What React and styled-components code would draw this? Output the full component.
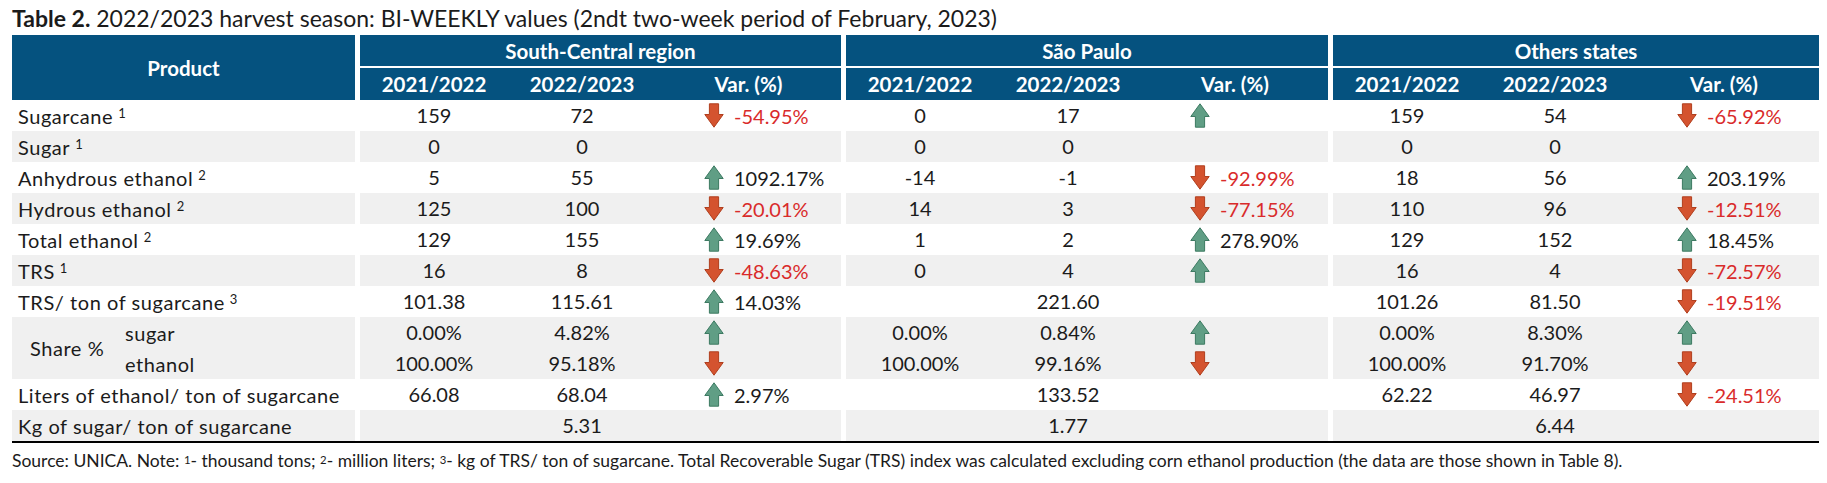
import styled, { createGlobalStyle } from 'styled-components'

const C = {
  blue: '#05527f', stripe: '#f0f0f0', ink: '#1b1b1b', red: '#d92b2b',
  down: '#d4532f', downEdge: '#b03f1e', up: '#609e85', upEdge: '#3d7a62',
}

const GlobalStyle = createGlobalStyle`
  body { margin:0; background:#fff; font-family:Lato, 'Open Sans', sans-serif; color:${C.ink}; }
`

const Page = styled.div`
  padding:4px 0 0 12px; width:1807px;
`
const Title = styled.div`
  font-size:23px; line-height:29px; margin-bottom:2px; white-space:nowrap;
  b { font-weight:700; }
`

const HeadGrid = styled.div`
  display:grid; grid-template-columns:343px 481px 482px 486px;
  grid-template-rows:31px 32px; column-gap:5px; row-gap:2px;
`
const HeadCell = styled.div`
  background:${C.blue}; color:#fff; font-weight:700; font-size:20.5px;
  display:flex; align-items:center; justify-content:center;
`
const ProductHead = styled(HeadCell)`grid-row:1 / span 2;`
const SubHeadRow = styled.div`
  display:grid; grid-template-columns:148px 148px 1fr;
  background:${C.blue}; color:#fff; font-weight:700; font-size:20.5px;
  grid-row:2; grid-column:${p => p.$col};
`
const SubHead = styled.div`
  display:flex; align-items:center; justify-content:center;
`

const Body = styled.div`border-bottom:2px solid #000;`
const Row = styled.div`
  display:grid; grid-template-columns:343px 481px 482px 486px; column-gap:5px;
  height:${p => p.$tall ? 62 : 31}px; font-size:20px;
`
const Label = styled.div`
  background:${p => p.$shade ? C.stripe : '#fff'};
  display:flex; align-items:center; padding-left:6px; white-space:nowrap;
  letter-spacing:0.55px;
`
const ShareLabel = styled.div`
  background:${C.stripe};
  display:grid; grid-template-columns:113px 1fr; align-items:center;
  letter-spacing:0.55px;
`
const ShareTitle = styled.div`padding-left:18px;`
const LineStack = styled.div`
  display:flex; flex-direction:column;
  & > * { height:31px; display:flex; align-items:center; }
`
const Sup = styled.sup`
  font-size:0.65em; vertical-align:top; position:relative; top:-0.2em; margin-left:5px;
`
const Group = styled.div`
  display:grid; grid-template-columns:148px 148px 1fr;
  background:${p => p.$shade ? C.stripe : '#fff'};
`
const Value = styled.div`
  display:flex; flex-direction:column; align-items:center; justify-content:center;
  & > span { height:31px; line-height:31px; }
`
const VarCell = styled.div`
  display:flex; flex-direction:column; justify-content:center; padding-left:48px;
`
const VarLine = styled.div`
  height:31px; display:flex; align-items:center; gap:10px;
  color:${p => p.$neg ? C.red : C.ink};
`
const Footnote = styled.div`
  font-size:17.5px; line-height:22px; margin-top:7px; white-space:nowrap;
  sup { font-size:0.65em; vertical-align:top; position:relative; top:-0.1em; }
`

const Arrow = ({ dir }) => dir === 'up' ? (
  <svg width="20" height="25" viewBox="0 0 20 25">
    <path d="M10 0.8 L19.2 13.5 H14.6 V24.2 H5.4 V13.5 H0.8 Z" fill={C.up} stroke={C.upEdge} strokeWidth="1" />
  </svg>
) : (
  <svg width="20" height="25" viewBox="0 0 20 25">
    <path d="M5.4 0.8 H14.6 V11.5 H19.2 L10 24.2 L0.8 11.5 H5.4 Z" fill={C.down} stroke={C.downEdge} strokeWidth="1" />
  </svg>
)

const groups = ['South-Central region', 'São Paulo', 'Others states']

const rows = [
  { label: 'Sugarcane', sup: '1', g: [['159', '72', ['down', '-54.95%']], ['0', '17', ['up']], ['159', '54', ['down', '-65.92%']]] },
  { label: 'Sugar', sup: '1', g: [['0', '0'], ['0', '0'], ['0', '0']] },
  { label: 'Anhydrous ethanol', sup: '2', g: [['5', '55', ['up', '1092.17%']], ['-14', '-1', ['down', '-92.99%']], ['18', '56', ['up', '203.19%']]] },
  { label: 'Hydrous ethanol', sup: '2', g: [['125', '100', ['down', '-20.01%']], ['14', '3', ['down', '-77.15%']], ['110', '96', ['down', '-12.51%']]] },
  { label: 'Total ethanol', sup: '2', g: [['129', '155', ['up', '19.69%']], ['1', '2', ['up', '278.90%']], ['129', '152', ['up', '18.45%']]] },
  { label: 'TRS', sup: '1', g: [['16', '8', ['down', '-48.63%']], ['0', '4', ['up']], ['16', '4', ['down', '-72.57%']]] },
  { label: 'TRS/ ton of sugarcane', sup: '3', g: [['101.38', '115.61', ['up', '14.03%']], ['', '221.60'], ['101.26', '81.50', ['down', '-19.51%']]] },
  { share: true, g: [[['0.00%', '100.00%'], ['4.82%', '95.18%']], [['0.00%', '100.00%'], ['0.84%', '99.16%']], [['0.00%', '100.00%'], ['8.30%', '91.70%']]] },
  { label: 'Liters of ethanol/ ton of sugarcane', g: [['66.08', '68.04', ['up', '2.97%']], ['', '133.52'], ['62.22', '46.97', ['down', '-24.51%']]] },
  { label: 'Kg of sugar/ ton of sugarcane', g: [['', '5.31'], ['', '1.77'], ['', '6.44']] },
]

const Vals = ({ v }) => (
  <Value>{(Array.isArray(v) ? v : [v]).map((t, i) => <span key={i}>{t}</span>)}</Value>
)

const App = () => (
  <Page>
    <GlobalStyle />
    <Title><b>Table 2.</b> 2022/2023 harvest season: BI-WEEKLY values (2ndt two-week period of February, 2023)</Title>

    <HeadGrid>
      <ProductHead>Product</ProductHead>
      {groups.map(g => <HeadCell key={g}>{g}</HeadCell>)}
      {groups.map((g, i) => (
        <SubHeadRow key={g} $col={i + 2}>
          <SubHead>2021/2022</SubHead>
          <SubHead>2022/2023</SubHead>
          <SubHead>Var. (%)</SubHead>
        </SubHeadRow>
      ))}
    </HeadGrid>

    <Body>
      {rows.map((r, ri) => {
        const shade = ri % 2 === 1
        if (r.share) {
          return (
            <Row key={ri} $tall>
              <ShareLabel>
                <ShareTitle>Share %</ShareTitle>
                <LineStack><span>sugar</span><span>ethanol</span></LineStack>
              </ShareLabel>
              {r.g.map((g, gi) => (
                <Group key={gi} $shade>
                  <Vals v={g[0]} />
                  <Vals v={g[1]} />
                  <VarCell>
                    <VarLine><Arrow dir="up" /></VarLine>
                    <VarLine><Arrow dir="down" /></VarLine>
                  </VarCell>
                </Group>
              ))}
            </Row>
          )
        }
        return (
          <Row key={ri}>
            <Label $shade={shade}>{r.label}{r.sup && <Sup>{r.sup}</Sup>}</Label>
            {r.g.map((g, gi) => (
              <Group key={gi} $shade={shade}>
                <Vals v={g[0]} />
                <Vals v={g[1]} />
                <VarCell>
                  {g[2] && (
                    <VarLine $neg={g[2][1]?.startsWith('-')}>
                      <Arrow dir={g[2][0]} />
                      {g[2][1]}
                    </VarLine>
                  )}
                </VarCell>
              </Group>
            ))}
          </Row>
        )
      })}
    </Body>

    <Footnote>
      Source: UNICA. Note: <sup>1</sup>- thousand tons; <sup>2</sup>- million liters; <sup>3</sup>- kg of TRS/ ton of sugarcane. Total Recoverable Sugar (TRS) index was calculated excluding corn ethanol production (the data are those shown in Table 8).
    </Footnote>
  </Page>
)

export default App
